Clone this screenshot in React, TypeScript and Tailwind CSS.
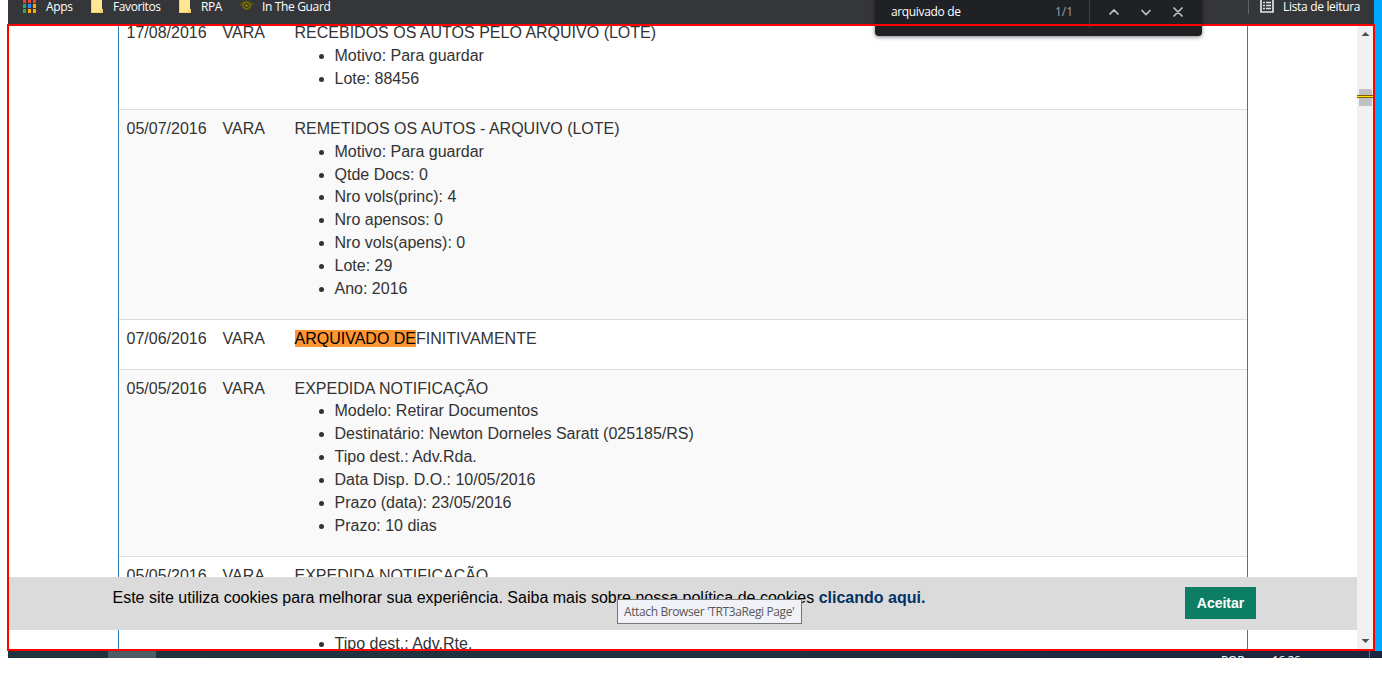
import React from "react";

type Movement = { date: string; title: React.ReactNode; items: string[]; shaded?: boolean };

const movements: Movement[] = [
  { date: "17/08/2016", title: "RECEBIDOS OS AUTOS PELO ARQUIVO (LOTE)", items: ["Motivo: Para guardar", "Lote: 88456"] },
  {
    date: "05/07/2016",
    title: "REMETIDOS OS AUTOS - ARQUIVO (LOTE)",
    items: ["Motivo: Para guardar", "Qtde Docs: 0", "Nro vols(princ): 4", "Nro apensos: 0", "Nro vols(apens): 0", "Lote: 29", "Ano: 2016"],
    shaded: true,
  },
  {
    date: "07/06/2016",
    title: (
      <>
        <span className="bg-[#ff9632] text-black">ARQUIVADO DE</span>FINITIVAMENTE
      </>
    ),
    items: [],
  },
  {
    date: "05/05/2016",
    title: "EXPEDIDA NOTIFICAÇÃO",
    items: [
      "Modelo: Retirar Documentos",
      "Destinatário: Newton Dorneles Saratt (025185/RS)",
      "Tipo dest.: Adv.Rda.",
      "Data Disp. D.O.: 10/05/2016",
      "Prazo (data): 23/05/2016",
      "Prazo: 10 dias",
    ],
    shaded: true,
  },
  { date: "05/05/2016", title: "EXPEDIDA NOTIFICAÇÃO", items: ["Modelo: Retirar Documentos", "Destinatário:", "Tipo dest.: Adv.Rte."] },
];

function MovementRow({ date, title, items, shaded }: Movement) {
  return (
    <div className={`flex border-t border-[#ddd] pt-[7.5px] pb-[18.5px] pl-[7.5px] ${shaded ? "bg-[#f9f9f9]" : "bg-white"}`}>
      <div className="w-24 shrink-0">{date}</div>
      <div className="w-[72px] shrink-0">VARA</div>
      <div>
        <div>{title}</div>
        <ul className="list-disc pl-10">
          {items.map((t) => (
            <li key={t}>{t}</li>
          ))}
        </ul>
      </div>
    </div>
  );
}

const appColors = ["#ea4335", "#ea4335", "#ea4335", "#34a853", "#2e8cff", "#fbab04", "#34a853", "#fbab04", "#fbab04"];

function AppsIcon() {
  return (
    <svg width="14" height="14" viewBox="0 0 14 14" className="shrink-0">
      {appColors.map((c, i) => (
        <rect key={i} x={(i % 3) * 5} y={Math.floor(i / 3) * 5 - 1} width="3" height="4" fill={c} />
      ))}
    </svg>
  );
}

function Folder() {
  return (
    <svg width="13" height="14" viewBox="0 0 13 14" className="shrink-0">
      <path d="M0 0h11v9h1v4H0z" fill="#ffe694" />
      <path d="M.5 0v12.500H9" fill="none" stroke="#f2cf66" />
      <path d="M9 13V9.500h3V13z" fill="#f5d06c" />
    </svg>
  );
}

function EyeIcon() {
  return (
    <svg width="14" height="12" viewBox="0 0 14 12" className="shrink-0">
      <path d="M0 4C3 .5 9-.5 11 3l3 .5-2 2C10 12 4 11 2 7z" fill="#5d560c" />
      <circle cx="6.500" cy="5.500" r="3" fill="#2f2c08" stroke="#8d821a" />
      <circle cx="6.500" cy="5.500" r="1.200" fill="#9b8f1f" />
    </svg>
  );
}

export default function App() {
  return (
    <div className="relative h-[675px] w-[1382px] overflow-hidden bg-white font-['Liberation_Sans',Arial,sans-serif]">
      <div className="ml-2 flex h-[651px] bg-[#00a8ff]">
        <div className="-ml-px flex w-[1368px] flex-col">
          <header className="ml-px flex h-6 w-[1366px] items-start bg-[#35363a] font-['Open_Sans','Noto_Sans',sans-serif] text-[12px] leading-[13px] text-white">
            <div className="flex w-[68px] pl-[15px]"><AppsIcon /><span className="ml-[9px] -tracking-[0.3px]">Apps</span></div>
            <div className="flex w-[95px] pl-[15px]"><Folder /><span className="ml-[9px] -tracking-[0.4px]">Favoritos</span></div>
            <div className="flex w-[61px] pl-2"><Folder /><span className="ml-[9px] -tracking-[0.5px]">RPA</span></div>
            <div className="flex grow whitespace-nowrap pl-2"><EyeIcon /><span className="ml-2 -tracking-[0.35px]">In The Guard</span></div>
            <div className="flex h-[14px] w-[126px] border-l border-[#5f6368] pl-[11px]">
              <svg width="14" height="14" viewBox="0 0 14 14" fill="none" className="shrink-0">
                <path d="M1-1v13h12V-1" stroke="#e2e3e5" strokeWidth="1.700" />
                <path d="M3 2.500h2M6 2.500h5M3 5.500h2M6 5.500h5M3 8.500h2M6 8.500h5" stroke="#e2e3e5" strokeWidth="1.300" />
              </svg>
              <span className="ml-[9px] whitespace-nowrap -tracking-[0.32px]">Lista de leitura</span>
            </div>
          </header>

          <div className="relative flex h-[627px] border-2 border-[#f00] bg-white">
            <main className="w-[1348px] shrink-0 overflow-hidden">
              <div className="-mt-[12.2px] ml-[109px] w-[1130px] border-x border-[#337ab7] text-[16px] leading-[22.857px] text-[#333]">
                {movements.map((m, i) => (
                  <MovementRow key={i} {...m} />
                ))}
              </div>
            </main>
            <aside className="flex w-4 flex-col items-center bg-[#f1f1f1]">
              <svg width="16" height="623" viewBox="0 0 16 623">
                <path d="M4.500 10h8l-4-4zM4.500 613h8l-4 4z" fill="#505050" />
                <path d="M2 63h13v17H2z" fill="#c1c1c1" />
                <path d="M0 69h16v3H0z" fill="#8a5a00" />
                <path d="M0 70h16v1H0z" fill="#ffe600" />
              </svg>
            </aside>

            <div className="absolute top-[551px] left-0 flex h-[53px] w-[1348px] items-start bg-[#dbdbdb] pl-[103.5px] text-[16px] leading-[22px] text-black">
              <p className="w-[1072.5px] pt-[10px]">
                Este site utiliza cookies para melhorar sua experiência. Saiba mais sobre nossa política de cookies{" "}
                <b className="text-[#003366]">clicando aqui.</b>
              </p>
              <button className="mt-[10px] h-8 w-[71px] bg-[#0b7e63] text-[14px] font-bold text-white">Aceitar</button>
            </div>
          </div>
        </div>
      </div>

      <footer className="ml-2 flex h-[7px] items-start overflow-hidden bg-linear-to-r from-[#20343f] via-[#1f313f] to-[#1b2440] font-['Open_Sans',sans-serif] text-[12px] leading-[14px] text-white">
        <div className="ml-[100px] h-[7px] w-12 bg-[#4d5d66]" />
        <span className="mt-[3px] ml-[1065px] w-[51px] -tracking-[0.2px]">POR</span>
        <span className="mt-[3px] w-[97px] -tracking-[0.5px]">16:26</span>
        <div className="h-[7px] w-px bg-[#68707f]" />
      </footer>

      <div className="absolute top-0 left-[875px] flex h-9 w-[327px] rounded-b-[4px] bg-[#202124] pl-4 font-['Open_Sans',sans-serif] text-[12px] shadow-[0_1px_4px_rgba(0,0,0,0.5)]">
        <span className="w-[164px] pt-[5px] leading-[14px] -tracking-[0.35px] text-white">arquivado de</span>
        <span className="w-[34px] pt-[5px] leading-[14px] text-[#9aa0a6]">1/1</span>
        <div className="h-7 w-px bg-[#3f4145]" />
        <svg width="112" height="24" viewBox="0 0 112 24" fill="none" stroke="#bdc1c6" strokeWidth="1.700">
          <path d="M19.500 14.500l4.500-4.500 4.500 4.500M51.500 10l4.500 4.500 4.500-4.500M83.500 7.500l9 9m0-9l-9 9" />
        </svg>
      </div>
      <div className="absolute top-6 left-[875px] h-0.5 w-[327px] bg-[#f00]" />

      <div className="absolute top-[599px] left-[617px] h-[25px] w-[185px] border border-[#767676] bg-[#f1f2f7] pl-[6px] font-['Open_Sans',sans-serif] text-[12px] leading-[23px] whitespace-nowrap text-[#575757] -tracking-[0.38px]">
        Attach Browser 'TRT3aRegi Page'
      </div>
    </div>
  );
}
